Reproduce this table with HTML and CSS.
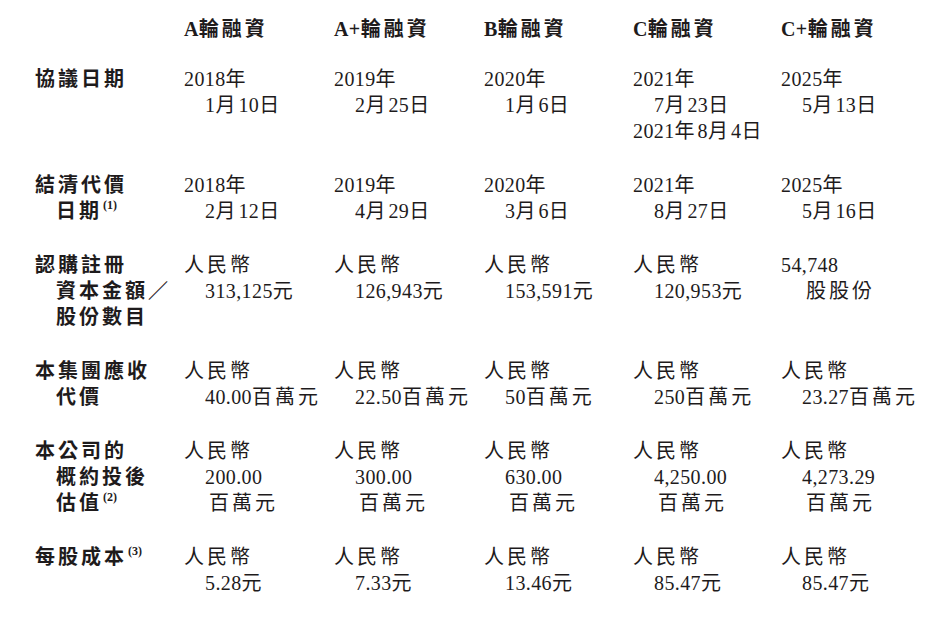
FILE: index.html
```html
<!DOCTYPE html>
<html lang="zh-Hant">
<head>
<meta charset="utf-8">
<title>融資</title>
<link rel="stylesheet" href="styles.css">
</head>
<body>
<div class="table">
  <div class="row head">
    <div class="cell"></div>
    <div class="cell"><span class="n">A</span>輪融資</div>
    <div class="cell"><span class="n">A+</span>輪融資</div>
    <div class="cell"><span class="n">B</span>輪融資</div>
    <div class="cell"><span class="n">C</span>輪融資</div>
    <div class="cell"><span class="n">C+</span>輪融資</div>
  </div>

  <div class="row">
    <div class="cell label"><div class="l">協議日期</div></div>
    <div class="cell"><div class="l"><span class="n">2018</span>年</div><div class="l i"><span class="n">1</span>月<span class="n">10</span>日</div></div>
    <div class="cell"><div class="l"><span class="n">2019</span>年</div><div class="l i"><span class="n">2</span>月<span class="n">25</span>日</div></div>
    <div class="cell"><div class="l"><span class="n">2020</span>年</div><div class="l i"><span class="n">1</span>月<span class="n">6</span>日</div></div>
    <div class="cell"><div class="l"><span class="n">2021</span>年</div><div class="l i"><span class="n">7</span>月<span class="n">23</span>日</div><div class="l"><span class="n">2021</span>年<span class="n">8</span>月<span class="n">4</span>日</div></div>
    <div class="cell"><div class="l"><span class="n">2025</span>年</div><div class="l i"><span class="n">5</span>月<span class="n">13</span>日</div></div>
  </div>

  <div class="row">
    <div class="cell label"><div class="l">結清代價</div><div class="l i"><span class="t">日期</span><sup>(1)</sup></div></div>
    <div class="cell"><div class="l"><span class="n">2018</span>年</div><div class="l i"><span class="n">2</span>月<span class="n">12</span>日</div></div>
    <div class="cell"><div class="l"><span class="n">2019</span>年</div><div class="l i"><span class="n">4</span>月<span class="n">29</span>日</div></div>
    <div class="cell"><div class="l"><span class="n">2020</span>年</div><div class="l i"><span class="n">3</span>月<span class="n">6</span>日</div></div>
    <div class="cell"><div class="l"><span class="n">2021</span>年</div><div class="l i"><span class="n">8</span>月<span class="n">27</span>日</div></div>
    <div class="cell"><div class="l"><span class="n">2025</span>年</div><div class="l i"><span class="n">5</span>月<span class="n">16</span>日</div></div>
  </div>

  <div class="row">
    <div class="cell label"><div class="l">認購註冊</div><div class="l i">資本金額／</div><div class="l i">股份數目</div></div>
    <div class="cell"><div class="l">人民幣</div><div class="l i"><span class="n">313,125</span>元</div></div>
    <div class="cell"><div class="l">人民幣</div><div class="l i"><span class="n">126,943</span>元</div></div>
    <div class="cell"><div class="l">人民幣</div><div class="l i"><span class="n">153,591</span>元</div></div>
    <div class="cell"><div class="l">人民幣</div><div class="l i"><span class="n">120,953</span>元</div></div>
    <div class="cell"><div class="l"><span class="n">54,748</span></div><div class="l i2">股股份</div></div>
  </div>

  <div class="row">
    <div class="cell label"><div class="l">本集團應收</div><div class="l i">代價</div></div>
    <div class="cell"><div class="l">人民幣</div><div class="l i"><span class="n">40.00</span>百萬元</div></div>
    <div class="cell"><div class="l">人民幣</div><div class="l i"><span class="n">22.50</span>百萬元</div></div>
    <div class="cell"><div class="l">人民幣</div><div class="l i"><span class="n">50</span>百萬元</div></div>
    <div class="cell"><div class="l">人民幣</div><div class="l i"><span class="n">250</span>百萬元</div></div>
    <div class="cell"><div class="l">人民幣</div><div class="l i"><span class="n">23.27</span>百萬元</div></div>
  </div>

  <div class="row">
    <div class="cell label"><div class="l">本公司的</div><div class="l i">概約投後</div><div class="l i"><span class="t">估值</span><sup>(2)</sup></div></div>
    <div class="cell"><div class="l">人民幣</div><div class="l i"><span class="n">200.00</span></div><div class="l i2">百萬元</div></div>
    <div class="cell"><div class="l">人民幣</div><div class="l i"><span class="n">300.00</span></div><div class="l i2">百萬元</div></div>
    <div class="cell"><div class="l">人民幣</div><div class="l i"><span class="n">630.00</span></div><div class="l i2">百萬元</div></div>
    <div class="cell"><div class="l">人民幣</div><div class="l i"><span class="n">4,250.00</span></div><div class="l i2">百萬元</div></div>
    <div class="cell"><div class="l">人民幣</div><div class="l i"><span class="n">4,273.29</span></div><div class="l i2">百萬元</div></div>
  </div>

  <div class="row last">
    <div class="cell label"><div class="l"><span class="t">每股成本</span><sup>(3)</sup></div></div>
    <div class="cell"><div class="l">人民幣</div><div class="l i"><span class="n">5.28</span>元</div></div>
    <div class="cell"><div class="l">人民幣</div><div class="l i"><span class="n">7.33</span>元</div></div>
    <div class="cell"><div class="l">人民幣</div><div class="l i"><span class="n">13.46</span>元</div></div>
    <div class="cell"><div class="l">人民幣</div><div class="l i"><span class="n">85.47</span>元</div></div>
    <div class="cell"><div class="l">人民幣</div><div class="l i"><span class="n">85.47</span>元</div></div>
  </div>
</div>
</body>
</html>
```

FILE: styles.css
```css
html, body {
  margin: 0;
  padding: 0;
  background: #ffffff;
}

body {
  color: #1e1b1c;
  font-family: "Liberation Serif", "Noto Sans CJK TC", serif;
  font-size: 20px;
  line-height: 26px;
}

.table {
  padding: 16px 0 0 35px;
  width: 890px;
}

.row {
  display: grid;
  grid-template-columns: 149px 150px 150px 149px 148px 144px;
  margin-bottom: 28px;
}

.row.head {
  margin-bottom: 24px;
  font-weight: 700;
}

.row.last {
  margin-top: 2px;
}

.cell {
  letter-spacing: 3px;
  white-space: nowrap;
}

.label {
  font-weight: 700;
}

.t {
  letter-spacing: 3px;
}

.t::after {
  content: "";
}

.n {
  letter-spacing: 0.4px;
}

.l {
  height: 26px;
}

.i {
  padding-left: 21px;
}

.i2 {
  padding-left: 25px;
}

sup {
  display: inline-block;
  font-family: "Liberation Serif", serif;
  font-size: 12px;
  font-weight: 700;
  letter-spacing: 0;
  line-height: 12px;
  vertical-align: top;
  margin-left: 1px;
  margin-top: 1px;
}
```
